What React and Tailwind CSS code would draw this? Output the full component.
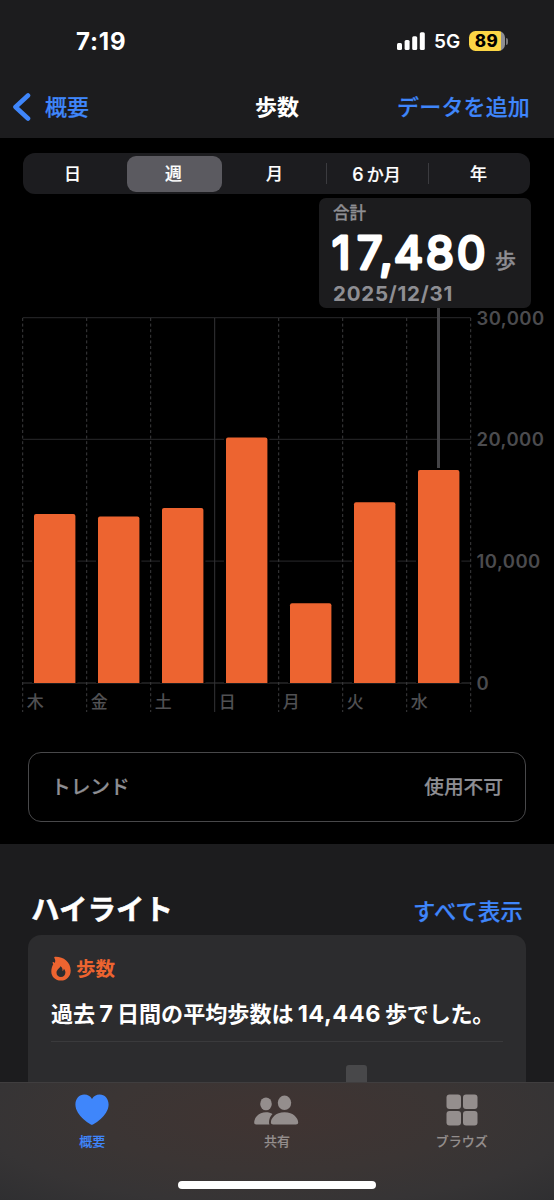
import React, { useState } from "react";

const ranges = ["日", "週", "月", "6か月", "年"];

const days = [
  { label: "木", steps: 13870 },
  { label: "金", steps: 13670 },
  { label: "土", steps: 14370 },
  { label: "日", steps: 20150 },
  { label: "月", steps: 6550 },
  { label: "火", steps: 14830 },
  { label: "水", steps: 17480 },
];

const ticks = [30000, 20000, 10000, 0];

const COL = 64;
const LEFT = 22.7;
const BASE = 375;
const toY = (steps) => BASE - (steps / 30000) * 365.4;

const StatusBar = () => (
  <div className="flex h-[82px] items-center justify-between pl-[76px] pr-[46px]">
    <span className="pt-[2px] font-['Inter'] text-[24px] font-bold leading-none tracking-[0.8px]">7:19</span>
    <div className="flex items-center">
      <svg width="28" height="18" viewBox="0 0 28 18" fill="#fff">
        <rect x="0" y="11" width="5" height="7" rx="1.5" />
        <rect x="7.6" y="8" width="5" height="10" rx="1.5" />
        <rect x="15.2" y="4.2" width="5" height="13.8" rx="1.5" />
        <rect x="22.8" y="0.2" width="5" height="17.8" rx="1.5" />
      </svg>
      <span className="ml-[9px] w-[27px] whitespace-nowrap pt-px font-['Inter'] text-[19px] font-semibold leading-none">
        5G
      </span>
      <div className="ml-[8px] flex h-5 w-9 items-center justify-center rounded-[6.5px] bg-[linear-gradient(90deg,#fbd545_32px,#8e8e93_32px)]">
        <span className="pr-px pt-px font-['Inter'] text-[17px] font-extrabold leading-none tracking-[0.4px] text-black">89</span>
      </div>
      <div className="ml-px h-[7px] w-[2px] rounded-r-full bg-[#77777b]" />
    </div>
  </div>
);

const NavBar = () => (
  <div className="grid h-[55px] grid-cols-[1fr_auto_1fr] items-center pb-[5px] pl-[13px] pr-[24px] text-[22px] leading-none">
    <button className="flex items-center font-medium text-[#3f86fb] [-webkit-text-stroke:0.2px]">
      <svg width="18" height="28" viewBox="0 0 18 28" fill="none">
        <path d="M15 2.500 2.500 14 15 25.500" stroke="currentColor" strokeWidth="4.600" strokeLinecap="round" strokeLinejoin="round" />
      </svg>
      <span className="ml-[14px]">概要</span>
    </button>
    <h1 className="pl-[11px] text-center font-bold">歩数</h1>
    <button className="whitespace-nowrap text-right font-medium tracking-[0.15px] text-[#3f86fb] [-webkit-text-stroke:0.2px]">
      データを追加
    </button>
  </div>
);

const RangePicker = ({ value, onChange }) => (
  <div className="ml-[23px] flex h-[41px] w-[507px] items-center rounded-xl bg-[#1c1c1f]">
    {ranges.map((r, i) => (
      <div
        key={r}
        className={`flex h-[21px] flex-1 items-center justify-center ${i > 2 ? "border-l border-[#3b3b3f]" : ""}`}
      >
        <button
          onClick={() => onChange(r)}
          className={`h-[36px] w-[95px] shrink-0 rounded-[9px] pr-[2px] pt-[2px] text-[17px] font-medium leading-none [-webkit-text-stroke:0.2px] ${
            r === value ? "bg-[#5b5a60]" : ""
          }`}
        >
          {r === "6か月" ? (
            <>
              <span className="mr-[3px] text-[18px]">6</span>か月
            </>
          ) : (
            r
          )}
        </button>
      </div>
    ))}
  </div>
);

const StepsChart = () => (
  <svg width="554" height="410" viewBox="0 0 554 410" className="block">
    {ticks.map((t) => (
      <g key={t}>
        <line x1={LEFT} x2={LEFT + COL * 7} y1={toY(t)} y2={toY(t)} stroke={t === 0 ? "#3a3a3c" : "#212123"} strokeWidth="1.2" />
        <text x="476.5" y={toY(t) + 7} fill="#4b4b4e" className="font-['Inter'] text-[18.5px] font-semibold tracking-[0.45px]">
          {t.toLocaleString("en-US")}
        </text>
      </g>
    ))}
    {Array.from({ length: 8 }, (_, i) => (
      <line
        key={i}
        x1={LEFT + COL * i}
        x2={LEFT + COL * i}
        y1="10"
        y2="404"
        stroke={i === 3 ? "#343437" : "#3c3c3e"}
        strokeWidth="1"
        strokeDasharray={i === 3 ? undefined : "3 2.6"}
      />
    ))}
    {days.map((d, i) => {
      const x = LEFT + COL * i + 11.3;
      const y = toY(d.steps);
      return (
        <g key={d.label}>
          <rect x={x - 2} y={y} width="45.4" height={BASE - y} fill="#000" />
          <path
            d={`M${x} ${BASE}V${y + 2}q0 -2 2 -2h37.4q2 0 2 2V${BASE}z`}
            fill="#ed6430"
          />
          <text x={LEFT + COL * i + 4} y="400" fill="#505053" className="text-[17px] font-medium [-webkit-text-stroke:0.2px_#505053]">
            {d.label}
          </text>
        </g>
      );
    })}
    {/* Selection marker */}
    <line x1="438.5" x2="438.5" y1="0" y2="160" stroke="#434346" strokeWidth="3" />
  </svg>
);

const Tooltip = () => (
  <div className="absolute left-[319px] top-[60px] h-[110px] w-[212px] rounded-[7px] bg-[#1c1c1e] pl-[14px] pt-[7px]">
    <p className="text-[16.5px] font-medium leading-[17px] text-[#8e8e93] [-webkit-text-stroke:0.3px]">合計</p>
    <div className="flex h-[56px] items-center whitespace-nowrap">
      <svg width="156" height="56" className="shrink-0 overflow-visible">
        <text
          x="-1 24 46.500 61 93 124"
          y="47"
          fill="#fff"
          stroke="#fff"
          strokeWidth="3.200"
          strokeLinejoin="round"
          className="font-['Inter'] text-[45px] font-normal"
        >
          17,480
        </text>
      </svg>
      <span className="ml-[6px] mt-[20px] text-[21px] font-medium leading-none text-[#8e8e93] [-webkit-text-stroke:0.3px]">
        歩
      </span>
    </div>
    <p className="mt-[6px] font-['Inter'] text-[20.5px] font-bold leading-[20px] tracking-[0.75px] text-[#8e8e93]">2025/12/31</p>
  </div>
);

const FlameIcon = () => (
  <svg width="20" height="25" viewBox="0 0 20 25">
    <path
      fill="#ed6430"
      fillRule="evenodd"
      d="M4 .7C12 .3 19.700 5.600 19.700 14.500 19.700 20.600 15.500 24.600 10 24.600 4.400 24.600.300 20.700.300 15.500.300 12.500 1.200 10.200 2.200 8.200 1.900 7.200 1.300 6.900 1.700 6.200 2.100 5.700 3.200 6.200 3.800 6.900 4.500 5.300 4.400 3.700 3.500 2.200 3 1.400 3.200.8 4 .7ZM9.200 10.200C9 12.300 5.500 13.400 5.500 16.700 5.500 19.300 7.400 21 9.900 21 12.500 21 14.400 19.200 14.400 16.500 14.400 15 13.800 13.600 12.800 12.700 12.800 14 12.200 14.700 11.500 14.900 11.700 13 11.300 11 9.200 10.200Z"
    />
  </svg>
);

const HeartIcon = () => (
  <svg width="34" height="32" viewBox="0 0 34 32" fill="currentColor">
    <path d="M17 31C15.900 31 .4 22 .4 10.600.4 4.600 4.300.6 9.300.6 12.700.6 15.500 2.300 17 5 18.500 2.300 21.300.6 24.700.6 29.700.6 33.600 4.600 33.600 10.600 33.600 22 18.100 31 17 31Z" />
  </svg>
);

const PeopleIcon = () => (
  <svg width="45" height="31" viewBox="0 0 45 31" fill="currentColor">
    <ellipse cx="12" cy="8.900" rx="5.800" ry="6.400" />
    <path d="M12 17.300c2.600 0 4.800.6 6.500 1.700-2.200 2.300-3.500 5-3.500 8.200 0 .8.100 1.600.5 2.300H2.200c-1.400 0-2-.8-2-2 0-4.300 4.200-10.200 11.800-10.200z" />
    <ellipse cx="30.500" cy="7.800" rx="6.700" ry="7.300" />
    <path d="M30.500 17.300c9 0 13.700 6 13.700 10.200 0 1.300-.8 2-2.300 2H19.200c-1.500 0-2.300-.7-2.300-2 0-4.200 4.600-10.200 13.600-10.200z" />
  </svg>
);

const GridIcon = () => (
  <svg width="32" height="32" viewBox="0 0 32 32" fill="currentColor">
    <rect x="0.500" y="0.500" width="14.500" height="14.500" rx="3" />
    <rect x="17" y="0.500" width="14.500" height="14.500" rx="3" />
    <rect x="0.500" y="17" width="14.500" height="14.500" rx="3" />
    <rect x="17" y="17" width="14.500" height="14.500" rx="3" />
  </svg>
);

const tabs = [
  { label: "概要", icon: <HeartIcon />, active: true },
  { label: "共有", icon: <PeopleIcon /> },
  { label: "ブラウズ", icon: <GridIcon /> },
];

const TabBar = () => (
  <nav className="flex h-[118px] flex-col border-t border-[#403e3f] bg-[radial-gradient(ellipse_at_50%_30%,#403432_0%,#3b3534_45%,#363435_75%,#2f2f31_100%)]">
    <div className="grid h-[92px] grid-cols-3">
      {tabs.map((t) => (
        <div
          key={t.label}
          className={`flex flex-col items-center pt-[11px] ${t.active ? "text-[#3f86fb]" : "text-[#948e8d]"}`}
        >
          <div className="flex h-[32px] items-center">{t.icon}</div>
          <span className="mt-[8px] text-[13px] font-medium leading-[14px] [-webkit-text-stroke:0.15px]">{t.label}</span>
        </div>
      ))}
    </div>
    <div className="mx-auto mt-[6px] h-[7.500px] w-[198px] rounded-full bg-white" />
  </nav>
);

const App = () => {
  const [range, setRange] = useState("週");

  return (
    <div className="flex h-[1200px] w-[554px] flex-col overflow-hidden bg-black font-['Inter','Noto_Sans_CJK_JP',sans-serif] text-white">
      <header className="h-[138px] shrink-0 bg-[#1c1c1e]">
        <StatusBar />
        <NavBar />
      </header>

      {/* Chart */}
      <main className="relative h-[706px] shrink-0 pt-[15px]">
        <RangePicker value={range} onChange={setRange} />
        <div className="mt-[114px]">
          <StepsChart />
        </div>
        <Tooltip />
        <div className="mx-auto mt-[34px] flex h-[70px] w-[498px] items-center justify-between rounded-[13px] border border-[#48484a] px-[22px] pt-[2px] text-[19.700px] font-medium text-[#8e8e93] [-webkit-text-stroke:0.2px]">
          <span>トレンド</span>
          <span>使用不可</span>
        </div>
      </main>

      {/* Highlights */}
      <section className="flex h-[238px] shrink-0 flex-col bg-[#1c1c1e] px-[28px]">
        <div className="flex h-[92px] items-end justify-between pl-[3px] pr-[3px]">
          <h2 className="mb-[10px] text-[28.500px] font-bold leading-[30px] [-webkit-text-stroke:0.5px]">ハイライト</h2>
          <a className="mb-[10px] text-[22.300px] font-medium leading-[26px] tracking-[0.200px] text-[#3f86fb] [-webkit-text-stroke:0.2px]">
            すべて表示
          </a>
        </div>
        <div className="flex flex-1 flex-col rounded-t-[13px] bg-[#2c2c2e] px-[23px] pt-[21px]">
          <div className="flex h-[25px] items-center gap-[5px] text-[#ed6430]">
            <FlameIcon />
            <span className="translate-y-px text-[19.500px] font-bold leading-none">歩数</span>
          </div>
          <p className="mt-[19px] whitespace-nowrap text-[22.100px] font-bold leading-[28px]">
            過去<span className="mx-[4px] text-[23.500px]">7</span>日間の平均歩数は
            <span className="mx-[4px] text-[23.500px] tracking-[0.550px]">14,446</span>
            <span className="tracking-[-0.300px]">歩でした。</span>
          </p>
          <div className="mt-[13px] h-px bg-[#3a3a3c]" />
          <div className="ml-[295px] mt-[23px] h-[17px] w-[21px] rounded-t-[3px] bg-[#48484a]" />
        </div>
      </section>

      <TabBar />
    </div>
  );
};

export default App;
